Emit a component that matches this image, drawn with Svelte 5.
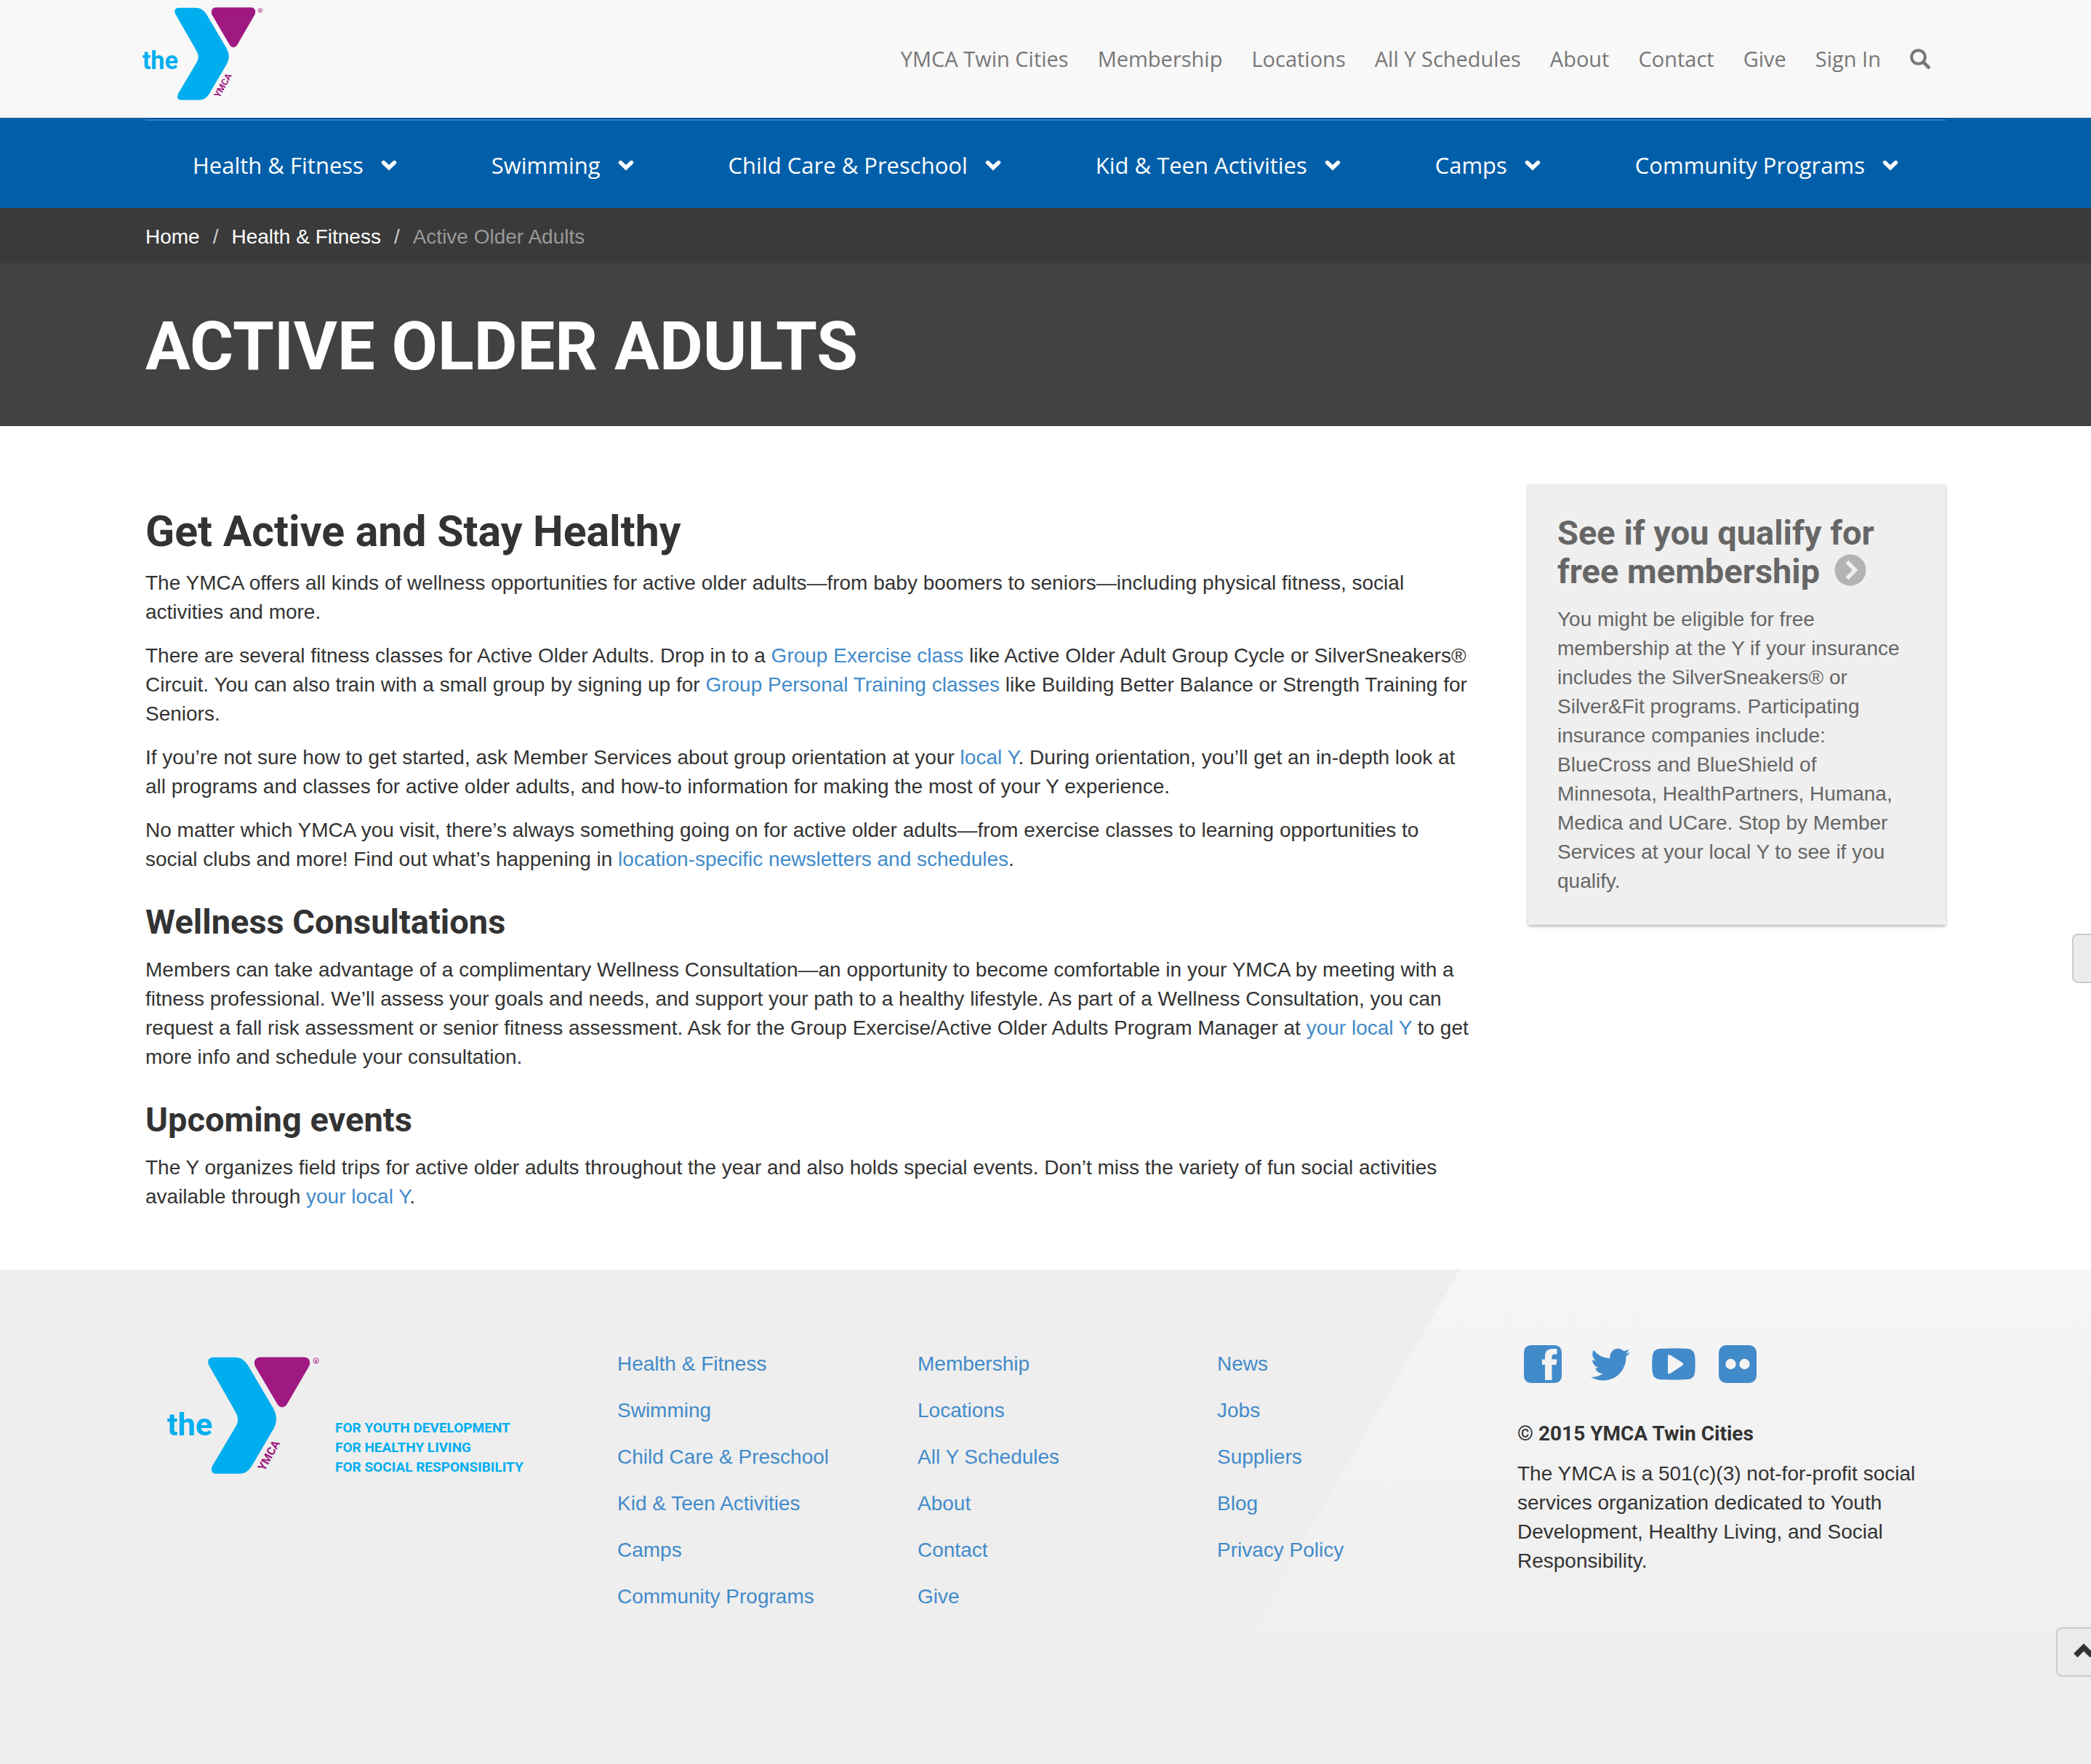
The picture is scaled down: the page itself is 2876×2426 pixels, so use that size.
<script>
  const topLinks = [
    'YMCA Twin Cities',
    'Membership',
    'Locations',
    'All Y Schedules',
    'About',
    'Contact',
    'Give',
    'Sign In'
  ];

  const sections = [
    'Health & Fitness',
    'Swimming',
    'Child Care & Preschool',
    'Kid & Teen Activities',
    'Camps',
    'Community Programs'
  ];

  const footerColumns = [
    sections,
    ['Membership', 'Locations', 'All Y Schedules', 'About', 'Contact', 'Give'],
    ['News', 'Jobs', 'Suppliers', 'Blog', 'Privacy Policy']
  ];
</script>

{#snippet logo()}
  <svg class="logo" viewBox="105 30 505 385" role="img" aria-label="the YMCA">
    <path
      fill="#00aeef"
      d="M256 32H330C349 32 362 43 372 58L457 202Q473 234 457 264L386 385C376 402 364 413 344 413H266Q252 412 252 398L255 388L332 258Q346 236 332 212L243 56Q236 34 256 32Z"
    />
    <path
      fill="#a01881"
      d="M411 31H557C573 32 579 47 572 61L501 183C493 199 475 199 467 183L396 62C389 47 395 32 411 31Z"
    />
    <text class="logo-the" x="107" y="287">the</text>
    <text class="logo-ymca" transform="translate(426 406) rotate(-61)">YMCA</text>
    <circle cx="595" cy="43" r="9" fill="none" stroke="#a01881" stroke-width="2" />
    <text class="logo-mark" x="595" y="48">R</text>
  </svg>
{/snippet}

<div class="page">
  <header class="top">
    <div class="container top-inner">
      <a class="brand" href="#home">{@render logo()}</a>
      <nav class="top-nav" aria-label="Site">
        {#each topLinks as link}
          <a href="#top">{link}</a>
        {/each}
        <button class="search" type="button" aria-label="Search">
          <svg viewBox="0 0 28 28">
            <circle cx="11.5" cy="11.5" r="9.3" fill="none" stroke="currentColor" stroke-width="4" />
            <path d="M18.5 18.5L25.5 25.5" stroke="currentColor" stroke-width="4.6" stroke-linecap="round" />
          </svg>
        </button>
      </nav>
    </div>
  </header>

  <nav class="main-nav" aria-label="Programs">
    <ul class="container">
      {#each sections as section}
        <li>
          <a href="#section">
            {section}
            <svg class="caret" viewBox="0 0 22 16" aria-hidden="true">
              <path d="M3.5 4.5L11 11.8L18.5 4.5" fill="none" stroke="currentColor" stroke-width="5.4" stroke-linecap="round" />
            </svg>
          </a>
        </li>
      {/each}
    </ul>
  </nav>

  <nav class="crumbs" aria-label="Breadcrumb">
    <ol class="container">
      <li><a href="#home">Home</a></li>
      <li><a href="#section">Health &amp; Fitness</a></li>
      <li class="current" aria-current="page">Active Older Adults</li>
    </ol>
  </nav>

  <div class="hero">
    <div class="container"><h1>ACTIVE OLDER ADULTS</h1></div>
  </div>

  <main class="container content">
    <article>
      <h2>Get Active and Stay Healthy</h2>
      <p>
        The YMCA offers all kinds of wellness opportunities for active older adults—from baby boomers to
        seniors—including physical fitness, social activities and more.
      </p>
      <p>
        There are several fitness classes for Active Older Adults. Drop in to a
        <a href="#classes">Group Exercise class</a> like Active Older Adult Group Cycle or SilverSneakers®
        Circuit. You can also train with a small group by signing up for
        <a href="#training">Group Personal Training classes</a> like Building Better Balance or Strength
        Training for Seniors.
      </p>
      <p>
        If you’re not sure how to get started, ask Member Services about group orientation at your
        <a href="#local">local Y</a>. During orientation, you’ll get an in-depth look at all programs and
        classes for active older adults, and how-to information for making the most of your Y experience.
      </p>
      <p>
        No matter which YMCA you visit, there’s always something going on for active older adults—from
        exercise classes to learning opportunities to social clubs and more! Find out what’s happening in
        <a href="#news">location-specific newsletters and schedules</a>.
      </p>
      <h3>Wellness Consultations</h3>
      <p>
        Members can take advantage of a complimentary Wellness Consultation—an opportunity to become
        comfortable in your YMCA by meeting with a fitness professional. We’ll assess your goals and needs,
        and support your path to a healthy lifestyle. As part of a Wellness Consultation, you can request a
        fall risk assessment or senior fitness assessment. Ask for the Group Exercise/Active Older Adults
        Program Manager at <a href="#local">your local Y</a> to get more info and schedule your consultation.
      </p>
      <h3>Upcoming events</h3>
      <p>
        The Y organizes field trips for active older adults throughout the year and also holds special
        events. Don’t miss the variety of fun social activities available through
        <a href="#local">your local Y</a>.
      </p>
    </article>

    <aside>
      <a class="card" href="#qualify">
        <h3>
          See if you qualify for free membership
          <svg class="go" viewBox="0 0 44 44" aria-hidden="true">
            <circle cx="22" cy="22" r="21.5" fill="#b3b3b3" />
            <path d="M17.5 10.5L28.5 22L17.5 33.5" fill="none" stroke="#efefef" stroke-width="5.5" />
          </svg>
        </h3>
        <p>
          You might be eligible for free membership at the Y if your insurance includes the SilverSneakers®
          or Silver&amp;Fit programs. Participating insurance companies include: BlueCross and BlueShield of
          Minnesota, HealthPartners, Humana, Medica and UCare. Stop by Member Services at your local Y to
          see if you qualify.
        </p>
      </a>
    </aside>
  </main>

  <footer>
    <div class="container footer-grid">
      <div class="footer-brand">
        {@render logo()}
        <p>FOR YOUTH DEVELOPMENT<br />FOR HEALTHY LIVING<br />FOR SOCIAL RESPONSIBILITY</p>
      </div>
      {#each footerColumns as column}
        <ul>
          {#each column as link}
            <li><a href="#footer">{link}</a></li>
          {/each}
        </ul>
      {/each}
      <div class="about">
        <div class="social">
          <a class="box" href="#facebook" aria-label="Facebook">
            <svg viewBox="0 0 52 52">
              <path
                fill="currentColor"
                fill-rule="evenodd"
                d="M11 0H41Q52 0 52 11V41Q52 52 41 52H11Q0 52 0 41V11Q0 0 11 0ZM29 48H38.5V27H44.5L45.5 19.5H38.5V16Q38.5 12.5 42 12.5H45.5V5H39.5Q29 5 29 15.5V19.5H25V27H29Z"
              />
            </svg>
          </a>
          <a class="bird" href="#twitter" aria-label="Twitter">
            <svg viewBox="0 0 24 20">
              <path
                fill="currentColor"
                d="M24 2.6a10 10 0 0 1-2.8.77A4.93 4.93 0 0 0 23.34.67a9.86 9.86 0 0 1-3.13 1.2A4.92 4.92 0 0 0 11.83 6.36 13.98 13.98 0 0 1 1.67 1.2 4.92 4.92 0 0 0 3.2 7.77a4.9 4.9 0 0 1-2.23-.61v.06a4.93 4.93 0 0 0 3.95 4.83 4.93 4.93 0 0 1-2.22.08 4.93 4.93 0 0 0 4.6 3.42A9.88 9.88 0 0 1 0 17.59a13.94 13.94 0 0 0 7.55 2.21c9.05 0 14-7.5 14-14 0-.21 0-.42-.02-.63A10 10 0 0 0 24 2.6Z"
              />
            </svg>
          </a>
          <a class="tube" href="#youtube" aria-label="YouTube">
            <svg viewBox="0 0 60 44">
              <path
                fill="currentColor"
                fill-rule="evenodd"
                d="M10 1Q30-.5 50 1Q58 2 59 10Q60.5 22 59 34Q58 42 50 43Q30 44.5 10 43Q2 42 1 34Q-.5 22 1 10Q2 2 10 1ZM22 11V33Q22 36.5 25 35L42 24Q44 22 42 20L25 9.5Q22 8 22 11Z"
              />
            </svg>
          </a>
          <a class="box" href="#flickr" aria-label="Flickr">
            <svg viewBox="0 0 52 52">
              <rect width="52" height="52" rx="10" fill="currentColor" />
              <circle cx="16.5" cy="26" r="7.2" fill="#f4f4f4" />
              <circle cx="35.5" cy="26" r="7.2" fill="#f4f4f4" />
            </svg>
          </a>
        </div>
        <h4>© 2015 YMCA Twin Cities</h4>
        <p>
          The YMCA is a 501(c)(3) not-for-profit social services organization dedicated to Youth
          Development, Healthy Living, and Social Responsibility.
        </p>
      </div>
    </div>
  </footer>

  <button class="tab tab-side" type="button" aria-label="Open panel"></button>
  <button class="tab tab-up" type="button" aria-label="Back to top">
    <svg viewBox="0 0 28 20">
      <path d="M2.8 16.8L14 5.6L25.2 16.8" fill="none" stroke="#333" stroke-width="7.6" />
    </svg>
  </button>
</div>

<style>
  :global(body) {
    margin: 0;
    background: #fff;
  }

  .page {
    position: relative;
    display: flex;
    flex-direction: column;
    min-height: 100vh;
    overflow: hidden;
    color: #333;
    font: 28px/40px 'Liberation Sans', Arial, sans-serif;
  }

  .page * {
    box-sizing: border-box;
  }

  .container {
    margin: 0 200px;
    padding: 0;
  }

  a {
    color: #428bca;
    text-decoration: none;
  }

  ul,
  ol {
    margin: 0;
    padding: 0;
    list-style: none;
  }

  svg {
    display: block;
    width: 100%;
  }

  h1,
  h2,
  h3,
  h4 {
    margin: 0;
    font-family: Roboto, sans-serif;
    font-weight: 700;
  }

  p {
    margin: 0 0 20px;
  }

  .top {
    background: #f8f8f8;
  }

  .top-inner {
    display: flex;
    justify-content: space-between;
    height: 162px;
  }

  .brand {
    width: 168px;
    margin: 10px 0 0 -5px;
  }

  .logo-the {
    fill: #00aeef;
    font: 700 103px Roboto, sans-serif;
  }

  .logo-ymca {
    fill: #a01881;
    font: 700 38px Roboto, sans-serif;
  }

  .logo-mark {
    fill: #a01881;
    font: 700 13px Roboto, sans-serif;
    text-anchor: middle;
  }

  .top-nav {
    display: flex;
    align-items: center;
    gap: 40px;
    padding-right: 21px;
    font-family: 'Open Sans', 'Noto Sans', sans-serif;
    font-size: 29px;
    white-space: nowrap;
  }

  .top-nav a,
  .search {
    color: #777;
  }

  .search {
    width: 28px;
    padding: 0;
    border: 0;
    background: none;
  }

  .main-nav {
    background: #015faa;
  }

  .main-nav ul {
    display: flex;
    justify-content: space-around;
    align-items: center;
    height: 124px;
    border-top: 2px solid #00529a;
    box-shadow: inset 0 2px #347fbb;
  }

  .main-nav a {
    display: flex;
    align-items: center;
    gap: 24px;
    padding-top: 4px;
    color: #fff;
    font: 31px/40px 'Open Sans', 'Noto Sans', sans-serif;
    white-space: nowrap;
  }

  .caret {
    width: 22px;
  }

  .crumbs {
    background: #3a3a3a;
  }

  .crumbs ol {
    display: flex;
    padding: 20px 0 16px;
  }

  .crumbs a {
    color: #fff;
  }

  .crumbs li + li::before {
    content: '/';
    padding: 0 18px;
    color: #ccc;
  }

  .crumbs .current {
    color: #999;
  }

  .hero {
    padding: 65px 0 59px;
    background: #424242;
  }

  h1 {
    color: #fff;
    font-size: 92px;
    line-height: 100px;
  }

  .content {
    display: grid;
    grid-template-columns: minmax(0, 1fr) 574px;
    align-items: start;
    gap: 76px;
    padding: 80px 0 60px;
  }

  h2 {
    margin: 32px 0 18px;
    font-size: 59px;
    line-height: 66px;
  }

  h3 {
    margin: 40px 0 20px;
    font-size: 47px;
    line-height: 52px;
  }

  .card {
    display: block;
    padding: 40px;
    background: #efefef;
    box-shadow: 0 2px 4px rgba(0, 0, 0, 0.3);
    color: #666;
  }

  .card h3 {
    margin-top: 0;
    line-height: 53px;
  }

  .card p {
    margin: 0;
  }

  .go {
    display: inline-block;
    width: 44px;
    margin-left: 8px;
    vertical-align: -4px;
  }

  footer {
    position: relative;
    flex: 1;
    min-height: 680px;
    padding: 104px 0 60px;
    background: #eee;
  }

  footer::before {
    content: '';
    position: absolute;
    top: 0;
    right: 0;
    width: 1214px;
    height: 600px;
    background: linear-gradient(#f5f5f5, #eee);
    clip-path: polygon(346px 0, 100% 0, 100% 100%, 0 100%);
  }

  .footer-grid {
    position: relative;
    display: grid;
    grid-template-columns: 649fr 413fr 412fr 413fr 589fr;
  }

  .footer-grid ul {
    display: flex;
    flex-direction: column;
    gap: 24px;
    padding-top: 6px;
  }

  .footer-brand {
    display: flex;
    align-items: flex-start;
    align-self: start;
    gap: 20px;
    padding: 16px 0 0 29px;
  }

  .footer-brand .logo {
    flex: none;
    width: 212px;
  }

  .footer-brand p {
    margin: 0;
    padding-top: 84px;
    color: #00aeef;
    font: 700 19px/27px Roboto, sans-serif;
    white-space: nowrap;
  }

  .social {
    display: flex;
    align-items: center;
    height: 52px;
    margin-bottom: 54px;
    padding-left: 9px;
  }

  .box {
    width: 52px;
  }

  .bird {
    width: 54px;
    margin: 0 30px 0 40px;
  }

  .tube {
    width: 60px;
    margin-right: 32px;
  }

  h4 {
    margin-bottom: 20px;
    font-size: 28px;
    line-height: 31px;
  }

  .tab {
    position: absolute;
    right: -28px;
    width: 76px;
    height: 68px;
    padding: 0 22px 4px;
    border: 2px solid #ccc;
    border-radius: 8px;
    background: #ebebeb;
  }

  .tab-side {
    top: 1284px;
    right: -50px;
  }

  .tab-up {
    bottom: 120px;
  }
</style>
